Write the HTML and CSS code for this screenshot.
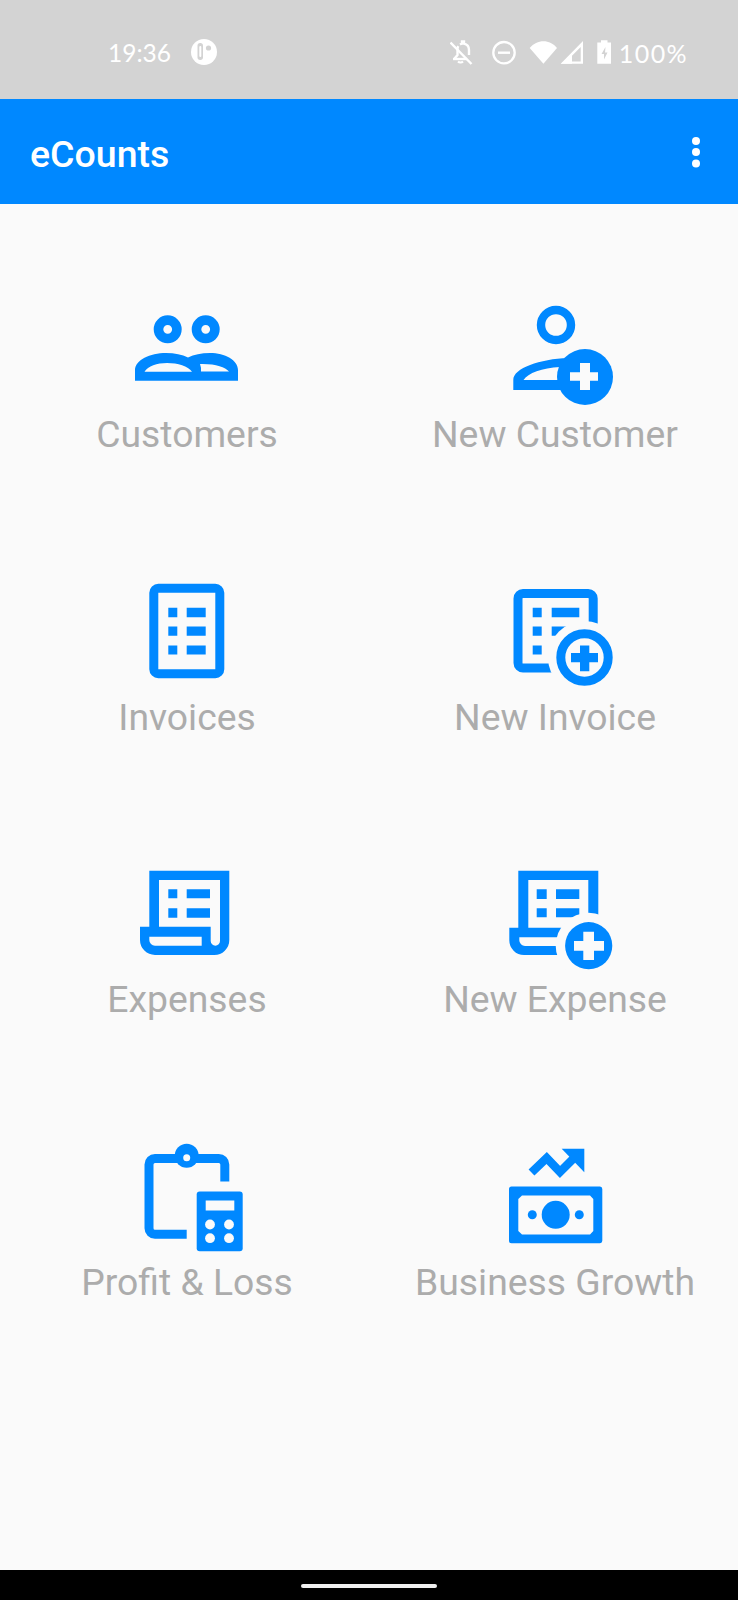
FILE: index.html
```html
<!DOCTYPE html>
<html lang="en">
<head>
    <meta charset="UTF-8">
    <meta name="viewport" content="width=device-width, initial-scale=1.0">
    <title>eCounts</title>
    <link rel="stylesheet" href="styles.css">
</head>
<body>
    <div class="status-bar">
        <div class="status-left">
            <span class="status-text status-time">19:36</span>
            <svg class="status-logo" viewBox="0 0 26 26">
                <circle cx="13" cy="13" r="13" fill="#fff"/>
                <rect x="6.5" y="4" width="5.5" height="17" rx="2.7" fill="#d3d3d3"/>
                <rect x="8.3" y="7" width="2" height="11" rx="1" fill="#fff"/>
                <circle cx="17.5" cy="9" r="2.6" fill="#d3d3d3"/>
            </svg>
        </div>
        <div class="status-right">
            <svg class="status-icons" viewBox="451 36 161 30">
                <!-- bell off -->
                <g fill="none" stroke="#fff" stroke-width="2.4">
                    <path d="M456 58V57l2.500-3V48c0-1 .3-2 .8-2.800M461 43.500c1-.6 2-.9 2-.9V40.500h2V42.600c3.300 .8 5 3.300 5 6.400V54"/>
                    <path d="M454 58H468"/>
                    <path d="M459 60.500a3 2 0 0 0 5 0" stroke-width="2"/>
                    <path d="M451.500 41.500L472.500 63"/>
                </g>
                <!-- do not disturb -->
                <circle cx="505" cy="51.700" r="10.700" fill="none" stroke="#fff" stroke-width="2.300"/>
                <rect x="499" y="50.500" width="12" height="2.400" fill="#fff"/>
                <!-- wifi -->
                <path d="M530.700 47C538 38 551 38 558 47L544.400 62.700Z" fill="#fff"/>
                <!-- signal -->
                <path d="M584 40V62.700H561.700ZM581.700 46L573 54.800V60.400H581.700Z" fill="#fff" fill-rule="evenodd"/>
                <path d="M573 54.800L561.700 62.700H573Z" fill="#fff"/>
                <!-- battery charging -->
                <path d="M602 39.300H608.500V41.500H612.300V62.700H598.300V41.500H602Z" fill="#fff"/>
                <path d="M606.500 46L602.500 53H605V58.500L608.500 51.500H606Z" fill="#d3d3d3"/>
            </svg>
            <span class="status-text status-battery">100%</span>
        </div>
    </div>

    <header class="app-bar">
        <span class="app-title">eCounts</span>
        <svg class="app-menu" viewBox="0 0 10 32">
            <circle cx="5" cy="5" r="4" fill="#fff"/>
            <circle cx="5" cy="16" r="4" fill="#fff"/>
            <circle cx="5" cy="27.500" r="4" fill="#fff"/>
        </svg>
    </header>

    <main class="menu-grid">
        <div class="menu-item">
            <svg class="menu-icon" viewBox="12 0 130 120">
                <circle cx="57.700" cy="39.300" r="9.200" fill="none" stroke="#0088ff" stroke-width="9.600"/>
                <circle cx="95.700" cy="39.300" r="9.200" fill="none" stroke="#0088ff" stroke-width="9.600"/>
                <path fill="#0088ff" fill-rule="evenodd" d="M25 90.700V80C25 70 40 63 56 63C65 63 72 64.500 78 67.500C84 64.500 91 63 100 63C115 63 128 70 128 80V90.700ZM34.500 81.700H82C78 76 68 73 57 73C47 73 38 76 34.500 81.700ZM91 81.500H119C115 77 105 73.500 90 74Q91.500 78 91 81.500Z"/>
            </svg>
            <span class="menu-label">Customers</span>
        </div>
        <div class="menu-item">
            <svg class="menu-icon" viewBox="0 0 130 120">
                <circle cx="66" cy="35" r="15" fill="none" stroke="#0088ff" stroke-width="8.400"/>
                <path fill="#0088ff" fill-rule="evenodd" d="M23.300 100V90C23.300 78 50 69 78 68V100ZM33.500 90H70V77C52 78 38 83 33.500 90Z"/>
                <circle cx="95" cy="87" r="28" fill="#0088ff"/>
                <path fill="#fafafa" d="M90 73H100V82.300H108V90.700H100V100H90V90.700H80V82.300H90Z"/>
            </svg>
            <span class="menu-label">New Customer</span>
        </div>

        <div class="menu-item">
            <svg class="menu-icon" viewBox="2 2.500 130 120">
                <rect x="33.800" y="17.800" width="66" height="85.400" rx="4.500" fill="none" stroke="#0088ff" stroke-width="9"/>
                <path fill="#0088ff" d="M48.300 37.300h9v9.400h-9ZM48.300 56h9v9.300h-9ZM48.300 75h9v9h-9ZM66.700 37.300h19v9.400h-19ZM66.700 56h19v9.300h-19ZM66.700 75h19v9h-19Z"/>
            </svg>
            <span class="menu-label">Invoices</span>
        </div>
        <div class="menu-item">
            <svg class="menu-icon" viewBox="0 2.500 130 120">
                <rect x="28" y="23" width="75.200" height="74.500" rx="5" fill="none" stroke="#0088ff" stroke-width="9"/>
                <path fill="#0088ff" d="M42.700 37.300h9v9.400h-9ZM42.700 56h9v9.300h-9ZM42.700 75h9v9h-9ZM61.700 37.300h27.600v9.400h-27.600ZM61.700 56h27.600v9.300h-27.600Z"/>
                <circle cx="94.500" cy="87" r="36.500" fill="#fafafa"/>
                <circle cx="94.500" cy="87" r="23.700" fill="none" stroke="#0088ff" stroke-width="9"/>
                <path fill="#0088ff" d="M90 75H99.300V82.500H108V91.700H99.300V100.700H90V91.700H81V82.500H90Z"/>
            </svg>
            <span class="menu-label">New Invoice</span>
        </div>

        <div class="menu-item">
            <svg class="menu-icon" viewBox="2 0 130 120">
                <path fill="#0088ff" fill-rule="evenodd" d="M29.300 15.700H109.300V85A15 15 0 0 1 94 100H35A15 15 0 0 1 20 85V71.700H29.300ZM39 25V71.700H90.700V86A4.650 4.650 0 0 0 100 86V25ZM29.300 81.700V85A5.700 5.700 0 0 0 35 90.700H81.700V81.700Z"/>
                <path fill="#0088ff" d="M48.300 34.300h9v9h-9ZM48.300 53.300h9v9.400h-9ZM66.700 34.300h23.300v9h-23.300ZM66.700 53.300h23.300v9.400h-23.300Z"/>
            </svg>
            <span class="menu-label">Expenses</span>
        </div>
        <div class="menu-item">
            <svg class="menu-icon" viewBox="0 0 130 120">
                <path fill="#0088ff" fill-rule="evenodd" d="M28.300 15.700H108.300V80H80V100H34A14.700 14.700 0 0 1 19.300 85.300V72.700H28.300ZM38.300 25V72.700H98.300V25ZM29.300 82.300V85.300A5.700 5.700 0 0 0 35 91H80V82.300Z"/>
                <path fill="#0088ff" d="M46.700 34.300h10v9.700h-10ZM46.700 53.300h10v9h-10ZM66 34.300h23.300v9.700h-23.300ZM66 53.300h23.300v9h-23.300Z"/>
                <circle cx="98.700" cy="90.700" r="33" fill="#fafafa"/>
                <circle cx="98.700" cy="90.700" r="23.600" fill="#0088ff"/>
                <path fill="#fafafa" d="M93.300 76.700H104V86H114V95.700H104V105H93.300V95.700H84V86H93.300Z"/>
            </svg>
            <span class="menu-label">New Expense</span>
        </div>

        <div class="menu-item">
            <svg class="menu-icon" viewBox="2 2.500 130 120">
                <path fill="none" stroke="#0088ff" stroke-width="9" d="M66.700 98.800H35A6 6 0 0 1 29 92.800V29A6 6 0 0 1 35 23H98.800A6 6 0 0 1 104.800 29V46"/>
                <circle cx="66.700" cy="20.300" r="12" fill="#0088ff"/>
                <circle cx="66.700" cy="22.300" r="3.500" fill="#fafafa"/>
                <rect x="76.700" y="56" width="46" height="59.700" rx="3" fill="#0088ff"/>
                <rect x="85.700" y="65" width="28.600" height="10" fill="#fafafa"/>
                <circle cx="90" cy="89" r="4.900" fill="#fafafa"/>
                <circle cx="109" cy="89" r="4.900" fill="#fafafa"/>
                <circle cx="90" cy="102.700" r="4.900" fill="#fafafa"/>
                <circle cx="109" cy="102.700" r="4.900" fill="#fafafa"/>
            </svg>
            <span class="menu-label">Profit &amp; Loss</span>
        </div>
        <div class="menu-item">
            <svg class="menu-icon" viewBox="0 2.500 130 120">
                <path fill="none" stroke="#0088ff" stroke-width="8.500" d="M41.500 37L56.700 22.500L70 36.500L88 18.500"/>
                <path fill="#0088ff" d="M71.700 13.300H94.300V36.700Z"/>
                <path fill="#0088ff" fill-rule="evenodd" d="M21.500 51H110A2.500 2.500 0 0 1 112.300 53.500V105.200A2.500 2.500 0 0 1 110 107.700H21.500A2.500 2.500 0 0 1 19 105.200V53.500A2.500 2.500 0 0 1 21.500 51ZM32 60L28.300 63.500V95.500L32 99H100L103.300 95.500V63.500L100 60Z"/>
                <circle cx="65.700" cy="79.300" r="14" fill="#0088ff"/>
                <circle cx="42.300" cy="79.300" r="4.500" fill="#0088ff"/>
                <circle cx="89.300" cy="79.300" r="4.500" fill="#0088ff"/>
            </svg>
            <span class="menu-label">Business Growth</span>
        </div>
    </main>

    <div class="nav-bar">
        <div class="nav-pill"></div>
    </div>
</body>
</html>
```

FILE: styles.css
```css
* {
    box-sizing: border-box;
}

body {
    margin: 0;
    height: 1600px;
    display: flex;
    flex-direction: column;
    background-color: #fafafa;
    font-family: Roboto, sans-serif;
    overflow: hidden;
}

.status-bar {
    height: 99px;
    flex-shrink: 0;
    display: flex;
    justify-content: space-between;
    align-items: center;
    padding: 4px 50px 0 108px;
    background-color: #d3d3d3;
}

.status-left,
.status-right {
    display: flex;
    align-items: center;
}

.status-text {
    font-family: Lato, sans-serif;
    color: #fff;
    padding-top: 2px;
}

.status-time {
    font-size: 24.5px;
}

.status-battery {
    font-size: 25px;
    letter-spacing: 1.4px;
}

.status-logo {
    width: 26px;
    height: 26px;
    margin-left: 20px;
}

.status-icons {
    width: 161px;
    height: 30px;
    margin-right: 8px;
}

.app-bar {
    height: 105px;
    flex-shrink: 0;
    display: flex;
    justify-content: space-between;
    align-items: center;
    padding: 0 37px 0 30px;
    background-color: #0088ff;
}

.app-title {
    font-size: 37.5px;
    font-weight: 500;
    color: #fff;
    padding-top: 4px;
}

.app-menu {
    width: 10px;
    height: 32px;
}

.menu-grid {
    flex: 1;
    display: grid;
    grid-template-columns: 368px 368px;
    grid-auto-rows: 282.5px;
    padding: 86px 0 0 3px;
}

.menu-item {
    display: flex;
    flex-direction: column;
    align-items: center;
}

.menu-icon {
    width: 130px;
    height: 120px;
}

.menu-label {
    font-size: 37.3px;
    line-height: 48px;
    color: #acacac;
    white-space: nowrap;
}

.nav-bar {
    height: 30px;
    flex-shrink: 0;
    display: flex;
    justify-content: center;
    padding-top: 14px;
    background-color: #000;
}

.nav-pill {
    width: 136px;
    height: 4px;
    border-radius: 2px;
    background-color: #f0f0f0;
}
```
